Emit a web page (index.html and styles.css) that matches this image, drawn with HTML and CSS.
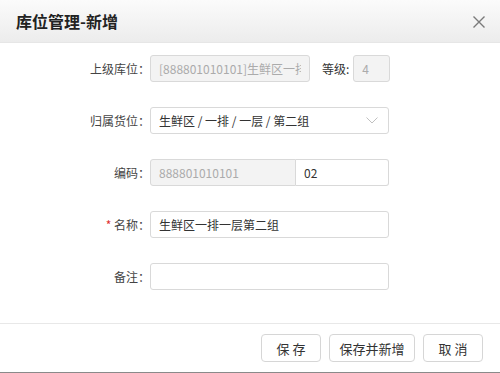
FILE: index.html
```html
<!DOCTYPE html>
<html lang="zh-CN">
<head>
  <meta charset="UTF-8" />
  <title>库位管理-新增</title>
  <link rel="stylesheet" href="styles.css">
</head>
<body>
  <div class="dialog">
    <div class="dialog-header">
      <h2>库位管理-新增</h2>
      <span class="close">
        <svg width="12" height="12" viewBox="0 0 12 12">
          <path d="M0.5 0.5 L11.5 11.5 M11.5 0.5 L0.5 11.5" stroke="#7a7a7a" stroke-width="1.4" fill="none" />
        </svg>
      </span>
    </div>

    <div class="dialog-body">
      <div class="row">
        <label class="label">上级库位：</label>
        <input class="field parent" type="text" value="[888801010101]生鲜区一排一层" disabled />
        <label class="label-inline">等级:</label>
        <input class="field level" type="text" value="4" disabled />
      </div>

      <div class="row">
        <label class="label">归属货位：</label>
        <div class="field select">
          <span>生鲜区 / 一排 / 一层 / 第二组</span>
          <svg width="12" height="7" viewBox="0 0 12 7">
            <path d="M0.5 0.5 L6 6 L11.5 0.5" stroke="#c0c0c0" stroke-width="1" fill="none" />
          </svg>
        </div>
      </div>

      <div class="row">
        <label class="label">编码：</label>
        <div class="code-group">
          <input class="field code-prefix" type="text" value="888801010101" disabled />
          <input class="field code-suffix" type="text" value="02" />
        </div>
      </div>

      <div class="row">
        <label class="label"><span class="required">*</span> 名称：</label>
        <input class="field wide" type="text" value="生鲜区一排一层第二组" />
      </div>

      <div class="row">
        <label class="label">备注：</label>
        <input class="field wide" type="text" value="" />
      </div>
    </div>

    <div class="dialog-footer">
      <button class="btn narrow">保 存</button>
      <button class="btn">保存并新增</button>
      <button class="btn narrow">取 消</button>
    </div>
  </div>
</body>
</html>
```

FILE: styles.css
```css
body {
  margin: 0;
  font-family: "Noto Sans CJK SC", "Noto Sans", sans-serif;
  color: #333;
  background-color: #fff;
}

.dialog {
  width: 500px;
  height: 373px;
  box-sizing: border-box;
  border-bottom: 1px solid #8a8a8a;
  display: flex;
  flex-direction: column;
}

.dialog-header {
  height: 43px;
  box-sizing: border-box;
  padding: 0 15px 0 16px;
  display: flex;
  align-items: center;
  justify-content: space-between;
  background: linear-gradient(#fbfbfb, #ececec);
  border-bottom: 1px solid #e6e6e6;
}

.dialog-header h2 {
  margin: 0;
  font-size: 16px;
  font-weight: bold;
  color: #222;
}

.close {
  display: flex;
  margin-top: 2px;
  cursor: pointer;
}

.dialog-body {
  flex: 1;
  padding-top: 12px;
  display: flex;
  flex-direction: column;
  gap: 25px;
}

.row {
  display: flex;
  align-items: center;
  height: 27px;
}

.label {
  width: 150px;
  text-align: right;
  font-size: 12px;
  color: #444;
}

.required {
  color: #e03030;
}

.label-inline {
  margin: 0 4px 0 12px;
  font-size: 12px;
  color: #333;
}

.field {
  height: 27px;
  box-sizing: border-box;
  border: 1px solid #d9d9d9;
  border-radius: 3px;
  padding: 0 8px;
  font-family: inherit;
  font-size: 12px;
  color: #333;
  background-color: #fff;
  outline: none;
}

.field:disabled {
  background-color: #f3f3f3;
  color: #ababab;
}

.parent {
  width: 160px;
}

.level {
  width: 37px;
}

.select {
  width: 239px;
  display: flex;
  align-items: center;
  justify-content: space-between;
  padding-right: 10px;
}

.code-group {
  display: flex;
  width: 239px;
}

.code-prefix {
  width: 146px;
  border-radius: 3px 0 0 3px;
}

.code-suffix {
  flex: 1;
  min-width: 0;
  border-left: none;
  border-radius: 0 3px 3px 0;
}

.wide {
  width: 239px;
}

.dialog-footer {
  border-top: 1px solid #e8e8e8;
  padding: 10px 17px 10px 0;
  display: flex;
  justify-content: flex-end;
  gap: 8px;
}

.btn {
  height: 28px;
  width: 86px;
  padding: 0;
  border: 1px solid #d6d6d6;
  border-radius: 4px;
  background-color: #fff;
  font-family: inherit;
  font-size: 13px;
  color: #333;
  cursor: pointer;
}

.btn.narrow {
  width: 60px;
}
```
